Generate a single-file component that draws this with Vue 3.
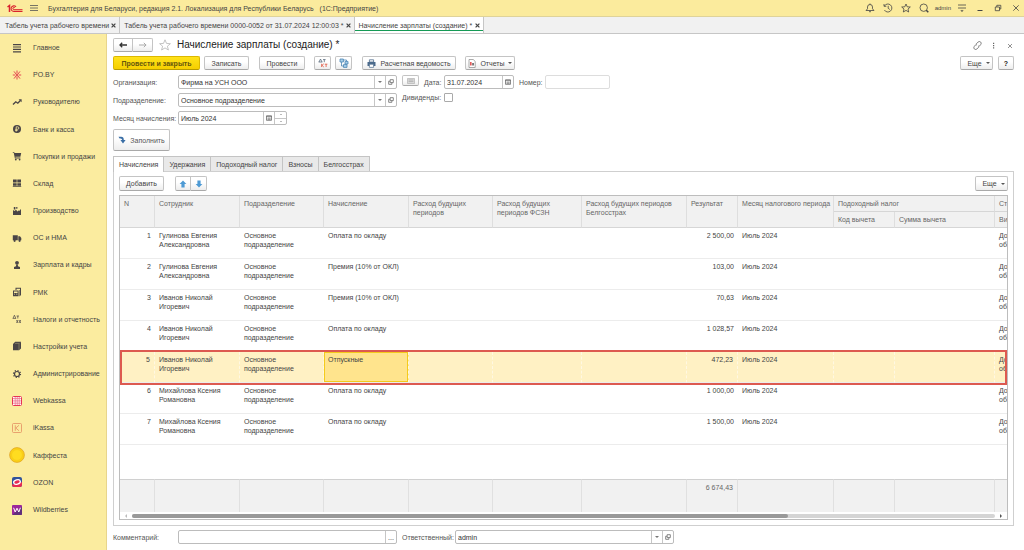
<script setup>
import { ref } from 'vue'

const sections = [
  { icon: 'menu', label: 'Главное' },
  { icon: 'spark', label: 'PO.BY' },
  { icon: 'trend', label: 'Руководителю' },
  { icon: 'bank', label: 'Банк и касса' },
  { icon: 'cart', label: 'Покупки и продажи' },
  { icon: 'stock', label: 'Склад' },
  { icon: 'factory', label: 'Производство' },
  { icon: 'truck', label: 'ОС и НМА' },
  { icon: 'person', label: 'Зарплата и кадры' },
  { icon: 'rmk', label: 'РМК' },
  { icon: 'tax', label: 'Налоги и отчетность' },
  { icon: 'book', label: 'Настройки учета' },
  { icon: 'gear', label: 'Администрирование' },
  { icon: 'webkassa', label: 'Webkassa' },
  { icon: 'ikassa', label: 'iKassa' },
  { icon: 'coin', label: 'Каффеста' },
  { icon: 'ozon', label: 'OZON' },
  { icon: 'wb', label: 'Wildberries' },
]

const windows = [
  'Табель учета рабочего времени',
  'Табель учета рабочего времени 0000-0052 от 31.07.2024 12:00:03 *',
  'Начисление зарплаты (создание) *',
]

const tabs = ['Начисления', 'Удержания', 'Подоходный налог', 'Взносы', 'Белгосстрах']
const activeTab = ref(0)

const rows = [
  { who: 'Гулинова Евгения Александровна', kind: 'Оплата по окладу', sum: '2 500,00' },
  { who: 'Гулинова Евгения Александровна', kind: 'Премия (10% от ОКЛ)', sum: '103,00' },
  { who: 'Иванов Николай Игоревич', kind: 'Премия (10% от ОКЛ)', sum: '70,63' },
  { who: 'Иванов Николай Игоревич', kind: 'Оплата по окладу', sum: '1 028,57' },
  { who: 'Иванов Николай Игоревич', kind: 'Отпускные', sum: '472,23' },
  { who: 'Михайлова Ксения Романовна', kind: 'Оплата по окладу', sum: '1 000,00' },
  { who: 'Михайлова Ксения Романовна', kind: 'Оплата по окладу', sum: '1 500,00' },
]
const selected = ref(4)
const month = ref('Июль 2024')
const date = ref('31.07.2024')
</script>

<template>
  <div class="app">
    <header class="topbar">
      <svg class="logo" viewBox="0 0 16 9" fill="none" stroke="#d9232e">
        <path d="M0.5 3 L2.5 1.5 V8" stroke-width="1.5" />
        <path d="M9 2.8 A2.8 2.8 0 1 0 7 7.4 H15.5" stroke-width="1.1" />
        <path d="M8 3.6 A1.2 1.2 0 1 0 7 5.6 H15.5" stroke-width="0.9" />
      </svg>
      <button class="plain burger" aria-label="Меню">
        <svg viewBox="0 0 8 8" width="8" height="8" stroke="#555" stroke-width="0.8"><path d="M0 1.5H8M0 4H8M0 6.5H8" /></svg>
      </button>
      <span class="apptitle">Бухгалтерия для Беларуси, редакция 2.1. Локализация для Республики Беларусь</span>
      <span class="platform">(1С:Предприятие)</span>
      <div class="tools">
        <button class="plain" aria-label="Уведомления">
          <svg viewBox="0 0 10 10"><path d="M1 7.5H9L7.5 5.8V4A2.5 2.5 0 0 0 2.5 4V5.8Z M4 8.7H6M5 0.5V1.5" /></svg>
        </button>
        <button class="plain" aria-label="История">
          <svg viewBox="0 0 10 10"><path d="M1.4 3A4 4 0 1 1 1.4 7M1 1V3.3H3.3M5.2 2.8V5.3L6.8 6.5" /></svg>
        </button>
        <button class="plain" aria-label="Избранное">
          <svg viewBox="0 0 10 10"><path d="M5 1L6.2 3.8L9.3 4L7 6L7.7 9L5 7.4L2.3 9L3 6L0.7 4L3.8 3.8Z" /></svg>
        </button>
        <button class="plain" aria-label="Поиск">
          <svg viewBox="0 0 10 10"><circle cx="4.7" cy="4.7" r="3.7" /><path d="M7.3 7.3L9.3 9.3" stroke-width="1.5" /></svg>
        </button>
        <a class="user" href="#">admin</a>
        <button class="plain" aria-label="Настройка">
          <svg viewBox="0 0 10 10"><path d="M1 2H9M1 5H9" /><path d="M3.8 7.4H6.2L5 8.7Z" fill="#444" stroke-width="0.4" /></svg>
        </button>
        <button class="plain" aria-label="Свернуть">
          <svg viewBox="0 0 10 10"><path d="M2.5 7.5H7.5" stroke-width="1" /></svg>
        </button>
        <button class="plain" aria-label="Развернуть">
          <svg viewBox="0 0 10 10"><path d="M2.3 4H6.5V7.7H2.3ZM3.8 4V2.3H7.8V6H6.5" /></svg>
        </button>
        <button class="plain" aria-label="Закрыть">
          <svg viewBox="0 0 10 10"><path d="M2.3 2.3L7.7 7.7M7.7 2.3L2.3 7.7" /></svg>
        </button>
      </div>
    </header>

    <div class="windows">
      <div v-for="(w, i) in windows" :key="w" class="window" :class="{ current: i === 2 }">
        <a href="#">{{ w }}</a>
        <button class="plain" aria-label="Закрыть вкладку">
          <svg viewBox="0 0 5 5" width="5" height="5" stroke="#444" stroke-width="1.2"><path d="M0.6 0.6L4.4 4.4M4.4 0.6L0.6 4.4" /></svg>
        </button>
      </div>
    </div>

    <div class="body">
      <nav class="side">
        <a v-for="s in sections" :key="s.label" href="#">
          <svg viewBox="0 0 16 16" fill="#4a4546">
            <g v-if="s.icon === 'menu'"><path d="M4 4H12V5.2H4ZM4 6.4H12V7.6H4ZM4 8.8H12V10H4ZM4 11.2H12V12.4H4Z" /></g>
            <g v-else-if="s.icon === 'spark'" fill="none" stroke="#e2354a" stroke-width="0.9">
              <path d="M8 3.5V6.6M8 9.4V12.5M3.8 8H6.4M9.6 8H12.2M5 4.4L7 7M11 4.4L9 7M5 11.6L7 9M11 11.6L9 9" />
              <circle cx="8" cy="8" r="0.7" fill="#e2354a" />
            </g>
            <g v-else-if="s.icon === 'trend'">
              <path d="M4 10.6L6.8 7.8L8.8 9.2L11.4 6.6" fill="none" stroke="#4a4546" stroke-width="1.4" /><path d="M9.6 5.2H12.6V8.2Z" />
            </g>
            <g v-else-if="s.icon === 'bank'">
              <circle cx="8" cy="8" r="4" /><path d="M7.2 10.6V5.8H8.6A1.2 1.2 0 0 1 8.6 8.3H6.2M6.2 9.5H8.6" fill="none" stroke="#fbec9f" stroke-width="0.8" />
            </g>
            <g v-else-if="s.icon === 'cart'">
              <path d="M3.8 4.2H5.3L5.6 5H12.2L11.4 8.8H6.3L6.5 9.6H11.4V10.4H5.9L4.8 5H3.8Z" /><circle cx="6.8" cy="11.6" r="0.9" /><circle cx="10.6" cy="11.6" r="0.9" />
            </g>
            <g v-else-if="s.icon === 'stock'"><path d="M4 4.5H7.7V7.6H4ZM8.3 4.5H12V7.6H8.3ZM4 8.2H7.7V10.8H4ZM8.3 8.2H12V10.8H8.3ZM3.8 11.3H12.2V12H3.8Z" /></g>
            <g v-else-if="s.icon === 'factory'"><path d="M4 12V7L5.5 8L7 6.8L8.5 8.4L10 7.2L11 8V6.5H12V12ZM4.8 4H6.4V6.6H4.8ZM7.2 4H8.4V5.8H7.2Z" /></g>
            <g v-else-if="s.icon === 'truck'"><path d="M3.8 5.3H8.8V10.3H3.8ZM9.3 6.3H11L12.3 8V10.3H9.3Z" /><circle cx="5.6" cy="10.8" r="1.1" /><circle cx="10.6" cy="10.8" r="1.1" /></g>
            <g v-else-if="s.icon === 'person'"><circle cx="8" cy="5.8" r="1.9" /><path d="M7.2 7.4H8.8L9 9.2L11 9.9V11.9H5V9.9L7 9.2Z" /></g>
            <g v-else-if="s.icon === 'rmk'"><path d="M6.5 3.8H12V11.5H11V4.8H7.5V6H6.5ZM4 6.6H9.6V12.2H4ZM10 6H10.6V12.2H10Z" /><path d="M5 7.6H8.6V9H5ZM5 9.8H6V10.6H5ZM7.2 9.8H8.4V10.6H7.2Z" fill="#fbec9f" /></g>
            <g v-else-if="s.icon === 'tax'" fill="none" stroke="#4a4546" stroke-width="0.7">
              <path d="M4 7.4L5.4 4.2L6.8 7.4M3.8 7.4H7M7.6 5H10M8.8 5V7.5M7.5 9L9 12M9 9L7.5 12M10 9L11.8 12M11.8 9L10 12" />
            </g>
            <g v-else-if="s.icon === 'book'"><path d="M6.2 3.8H12V10.5L10 12.2H4V6Z" /><path d="M10 5.8V12M6 5.4H10.4L11.2 4.6" stroke="#b3a97a" stroke-width="0.5" fill="none" /></g>
            <g v-else-if="s.icon === 'gear'" fill="none" stroke="#4a4546"><circle cx="8" cy="8" r="2.5" stroke-width="1.2" /><circle cx="8" cy="8" r="3.5" stroke-width="1.2" stroke-dasharray="1.2 1.55" /></g>
            <g v-else-if="s.icon === 'webkassa'">
              <rect x="3.5" y="3.5" width="9" height="9" rx="1" fill="#fff" stroke="#e63455" stroke-width="1" />
              <path d="M4 5.6H12M4 7.9H12M4 10.2H12M6.2 4V12M8.2 4V12M10.2 4V12" stroke="#ee6f86" stroke-width="0.8" />
            </g>
            <g v-else-if="s.icon === 'ikassa'" fill="none" stroke="#e58f62" stroke-width="0.8">
              <rect x="3.5" y="3.5" width="9" height="9" rx="1" /><path d="M6.3 5.3V10.8M10 5.3L6.8 8L10 10.8" />
            </g>
            <g v-else-if="s.icon === 'coin'"><circle cx="8" cy="8" r="7.4" fill="#fbd115" stroke="#dd9f22" stroke-width="0.7" /><circle cx="8" cy="8" r="5.4" fill="#ffdc20" stroke="#f3c41a" stroke-width="0.5" /></g>
            <g v-else-if="s.icon === 'ozon'">
              <rect x="3" y="3" width="10" height="10" rx="2" fill="#31539b" /><path d="M3 10.5L13 8V11A2 2 0 0 1 11 13H5A2 2 0 0 1 3 11Z" fill="#e72b52" />
              <ellipse cx="8" cy="8" rx="3.4" ry="2.2" fill="#e72b52" stroke="#fff" stroke-width="1.3" transform="rotate(-15 8 8)" />
            </g>
            <g v-else>
              <rect x="3" y="3" width="10" height="10" rx="1" fill="#9b279b" /><path d="M3 13L13 5V12A1 1 0 0 1 12 13Z" fill="#61307b" />
              <path d="M4.6 5.8L6.2 10L8 6.2L9.8 10L11.4 5.8" fill="none" stroke="#fff" stroke-width="1" />
            </g>
          </svg>
          <span>{{ s.label }}</span>
        </a>
      </nav>

      <main class="form">
        <div class="heading">
          <div class="pair">
            <button class="btn" aria-label="Назад"><svg viewBox="0 0 8 8" width="8" height="8" fill="none" stroke="#333" stroke-width="1.3"><path d="M0.8 4H8M3.2 1.8L1 4L3.2 6.2" /></svg></button>
            <button class="btn" aria-label="Вперед"><svg viewBox="0 0 8 8" width="8" height="8" fill="none" stroke="#aaa" stroke-width="1"><path d="M0 4H7.2M4.8 1.8L7 4L4.8 6.2" /></svg></button>
          </div>
          <svg class="star" viewBox="0 0 12 12" width="12" height="12" fill="none" stroke="#b5b5b5" stroke-width="0.8"><path d="M6 0.8L7.5 4.4L11.4 4.7L8.4 7.2L9.4 11L6 8.9L2.6 11L3.6 7.2L0.6 4.7L4.5 4.4Z" /></svg>
          <h1>Начисление зарплаты (создание) *</h1>
          <div class="right">
            <button class="plain" aria-label="Ссылка"><svg viewBox="0 0 9 9" width="9" height="9" fill="none" stroke="#666" stroke-width="0.8"><path d="M3.4 3V2.6L5 1.2A1.6 1.6 0 0 1 7.8 3.4L6.4 5.2H5M5.6 6V6.4L4 7.8A1.6 1.6 0 0 1 1.2 5.6L2.6 3.8H4" /></svg></button>
            <button class="plain" aria-label="Действия"><svg viewBox="0 0 9 9" width="9" height="9" fill="#666"><path d="M4 1.8H5.2V3H4ZM4 4H5.2V5.2H4ZM4 6.2H5.2V7.4H4Z" /></svg></button>
            <button class="plain" aria-label="Закрыть форму"><svg viewBox="0 0 9 9" width="9" height="9" stroke="#777" stroke-width="0.8"><path d="M3 3L7 7M7 3L3 7" /></svg></button>
          </div>
        </div>

        <div class="commands">
          <button class="btn primary">Провести и закрыть</button>
          <button class="btn save">Записать</button>
          <button class="btn post">Провести</button>
          <button class="btn icon" aria-label="Проводки"><svg viewBox="0 0 10 10" width="10" height="10" fill="none" stroke-width="0.8"><path d="M1 4L2.5 1L4 4M0.6 4H4.4M5 1.6H7.6M6.3 1.6V4.2" stroke="#55677a" /><path d="M3.6 5.8V9M5.8 5.8L4 7.3L5.8 9M6.8 6.2H9.4M8.1 6.2V9" stroke="#e0563f" /></svg></button>
          <button class="btn icon structure" aria-label="Структура подчиненности"><svg viewBox="0 0 10 10" width="10" height="10"><path d="M1 1H4.4V4H1ZM6 3.4H9V6H6ZM4.5 6.6H8V9.4H4.5Z" fill="#a9cfe8" stroke="#4b87b5" stroke-width="0.8" /><path d="M4.5 2H7.5V3.4M2.5 4V8H4.5" fill="none" stroke="#4b87b5" stroke-width="0.8" /></svg></button>
          <button class="btn sheet"><svg viewBox="0 0 9 9" width="9" height="9"><path d="M2.4 0.8H6.6V3H2.4Z" fill="#fff" stroke="#4c6b8c" stroke-width="0.8" /><path d="M0.5 3H8.5V7H0.5Z" fill="#4c6b8c" /><path d="M2.4 5.2H6.6V8.4H2.4Z" fill="#fff" stroke="#4c6b8c" stroke-width="0.7" /></svg>Расчетная ведомость</button>
          <button class="btn reports"><svg viewBox="0 0 8 9" width="8" height="9"><path d="M1 0.5H5.2L7.2 2.4V8.5H1Z" fill="#fff" stroke="#888" stroke-width="0.7" /><path d="M2.2 3H3.5V6.5H2.2Z" fill="#d33" /><path d="M4.3 4H5.8V6.5H4.3Z" fill="#555" /></svg>Отчеты<i class="caret"></i></button>
          <div class="right">
            <button class="btn more">Еще<i class="caret"></i></button>
            <button class="btn help"><b>?</b></button>
          </div>
        </div>

        <div class="line">
          <label class="lead" for="org">Организация:</label>
          <div class="field wide">
            <select id="org"><option>Фирма на УСН ООО</option></select>
            <span class="drop"><i class="caret"></i></span>
            <button aria-label="Открыть организацию"><svg viewBox="0 0 7 7" width="6" height="6"><path d="M2.5 0.8H6.2V4.2H2.5ZM2.5 2.6H0.8V6.2H4.5V4.2" /></svg></button>
          </div>
          <button class="btn kb" aria-label="Подписи"><svg viewBox="0 0 8 6" width="8" height="6"><path d="M0.5 0.5H7.5V5.5H0.5Z" fill="#ddd" stroke="#aaa" stroke-width="0.6" /><path d="M1.5 2H6.5M1.5 3.6H6.5" stroke="#999" stroke-width="0.6" /></svg></button>
          <label class="date-label" for="date">Дата:</label>
          <div class="field date">
            <input id="date" v-model="date" type="text">
            <button aria-label="Выбрать дату"><svg viewBox="0 0 7 7" width="6" height="6"><path d="M0.6 1H6.4V6.2H0.6Z" /><path d="M0.6 1.5H6.4M1.8 3.6H5.4M1.8 5H5.4" /></svg></button>
          </div>
          <label class="num-label" for="num">Номер:</label>
          <div class="field num"><input id="num" type="text"></div>
        </div>

        <div class="line">
          <label class="lead" for="dep">Подразделение:</label>
          <div class="field wide">
            <select id="dep"><option>Основное подразделение</option></select>
            <span class="drop"><i class="caret"></i></span>
            <button aria-label="Открыть подразделение"><svg viewBox="0 0 7 7" width="6" height="6"><path d="M2.5 0.8H6.2V4.2H2.5ZM2.5 2.6H0.8V6.2H4.5V4.2" /></svg></button>
          </div>
          <label class="div-label" for="div">Дивиденды:</label>
          <input id="div" class="check" type="checkbox">
        </div>

        <div class="line">
          <label class="lead" for="month">Месяц начисления:</label>
          <div class="field month">
            <input id="month" v-model="month" type="text">
            <button aria-label="Выбрать месяц"><svg viewBox="0 0 7 7" width="6" height="6"><path d="M0.6 1H6.4V6.2H0.6Z" /><path d="M0.6 1.5H6.4M1.8 3.6H5.4M1.8 5H5.4" /></svg></button>
            <div class="spin">
              <button aria-label="Следующий месяц"><i class="caret up"></i></button>
              <button aria-label="Предыдущий месяц"><i class="caret"></i></button>
            </div>
          </div>
        </div>

        <button class="btn fill"><svg viewBox="0 0 8 8" width="8" height="8"><path d="M0.5 0.8H3.2Q5.8 0.8 5.8 4H7.6L5 7.4L2.4 4H4.2Q4 2.4 2.8 2.4H1.6Z" fill="#3a6ea5" /></svg>Заполнить</button>

        <div class="tabs" role="tablist">
          <button v-for="(t, i) in tabs" :key="t" role="tab" :aria-selected="i === activeTab" :class="{ on: i === activeTab }" @click="activeTab = i">{{ t }}</button>
        </div>

        <section class="panel">
          <div class="rowtools">
            <button class="btn add">Добавить</button>
            <div class="pair arrows">
              <button class="btn" aria-label="Вверх"><svg viewBox="0 0 8 8" width="8" height="8"><path d="M4 0.5L7.4 4H5.6V7.5H2.4V4H0.6Z" fill="#4e9ad4" /></svg></button>
              <button class="btn" aria-label="Вниз"><svg viewBox="0 0 8 8" width="8" height="8"><path d="M4 7.5L7.4 4H5.6V0.5H2.4V4H0.6Z" fill="#4e9ad4" /></svg></button>
            </div>
            <div class="right"><button class="btn more">Еще<i class="caret"></i></button></div>
          </div>

          <div class="grid">
            <table>
              <colgroup>
                <col class="c-n"><col class="c-who"><col class="c-dep"><col class="c-who"><col class="c-dep"><col class="c-fszn"><col class="c-bgs"><col class="c-sum"><col class="c-month"><col class="c-code"><col class="c-ded"><col>
              </colgroup>
              <thead>
                <tr>
                  <th rowspan="2">N</th>
                  <th rowspan="2">Сотрудник</th>
                  <th rowspan="2">Подразделение</th>
                  <th rowspan="2">Начисление</th>
                  <th rowspan="2">Расход будущих периодов</th>
                  <th rowspan="2">Расход будущих периодов ФСЗН</th>
                  <th rowspan="2">Расход будущих периодов Белгосстрах</th>
                  <th rowspan="2">Результат</th>
                  <th rowspan="2" class="nowrap">Месяц налогового периода</th>
                  <th colspan="2">Подоходный налог</th>
                  <th class="cut">Ст</th>
                </tr>
                <tr>
                  <th>Код вычета</th>
                  <th>Сумма вычета</th>
                  <th class="cut">Вид</th>
                </tr>
              </thead>
              <tbody>
                <tr v-for="(r, i) in rows" :key="i" :class="{ selected: i === selected }" @click="selected = i">
                  <td class="r">{{ i + 1 }}</td>
                  <td>{{ r.who }}</td>
                  <td>Основное подразделение</td>
                  <td class="kind">{{ r.kind }}</td>
                  <td></td><td></td><td></td>
                  <td class="r">{{ r.sum }}</td>
                  <td>{{ month }}</td>
                  <td></td><td></td>
                  <td class="cut">До<br>обы</td>
                </tr>
                <tr class="blank"><td colspan="12"></td></tr>
              </tbody>
              <tfoot>
                <tr>
                  <td v-for="n in 12" :key="n" class="r">{{ n === 8 ? '6 674,43' : '' }}</td>
                </tr>
              </tfoot>
            </table>
            <div class="scroll">
              <i class="tri left"></i>
              <div class="track"><div class="thumb"></div></div>
              <i class="tri"></i>
            </div>
          </div>
        </section>

        <div class="line bottom">
          <label class="lead" for="comment">Комментарий:</label>
          <div class="field wide">
            <input id="comment" type="text">
            <button aria-label="Редактировать комментарий">...</button>
          </div>
          <label class="resp-label" for="resp">Ответственный:</label>
          <div class="field wide">
            <select id="resp"><option>admin</option></select>
            <span class="drop"><i class="caret"></i></span>
            <button aria-label="Открыть ответственного"><svg viewBox="0 0 7 7" width="6" height="6"><path d="M2.5 0.8H6.2V4.2H2.5ZM2.5 2.6H0.8V6.2H4.5V4.2" /></svg></button>
          </div>
        </div>
      </main>
    </div>
  </div>
</template>

<style>
body { background: #fff; }
</style>

<style scoped>
* { box-sizing: border-box; }
.app { display: flex; flex-direction: column; min-height: 100vh; font-family: "Liberation Sans", Arial, sans-serif; font-size: 7px; line-height: 9px; color: #444; }
button, input, select { font: inherit; color: inherit; margin: 0; }
svg { display: block; flex: none; }
a { color: inherit; text-decoration: none; }
.plain { border: 0; padding: 0; background: none; display: flex; align-items: center; justify-content: center; }
.right { margin-left: auto; display: flex; align-items: center; }

.topbar { display: flex; align-items: center; height: 17px; padding: 0 3px 0 7px; background: #fbeb9d; border-bottom: 1px solid #dfd39a; white-space: nowrap; }
.logo { width: 16px; height: 9px; }
.burger { margin: 0 10px 0 7px; }
.platform { margin-left: 6px; }
.tools { margin-left: auto; display: flex; align-items: center; gap: 8px; }
.tools svg { width: 10px; height: 10px; fill: none; stroke: #444; stroke-width: 0.8; }
.user { font-size: 6px; margin: 0 -2px; }

.windows { display: flex; height: 17px; background: #f1f1f1; border-bottom: 1px solid #c6c6c6; white-space: nowrap; }
.window { display: flex; align-items: center; gap: 2px; padding: 0 3px 0 4px; border-right: 1px solid #c6c6c6; }
.window:first-child { padding-left: 5px; }
.window.current { background: #fff; gap: 3px; box-shadow: inset 0 -2px #fff, inset 0 -3px #159a55; }

.body { flex: 1; display: flex; }
.side { flex: none; width: 107px; display: flex; flex-direction: column; padding-bottom: 27px; background: #fbec9f; border-right: 1px solid #e8d58c; white-space: nowrap; }
.side a { flex: 1; display: flex; align-items: center; padding-left: 9px; gap: 8px; }
.side svg { width: 16px; height: 16px; }

.form { flex: 1; min-width: 0; display: flex; flex-direction: column; padding: 4px 10px 0 6px; }
.btn { display: flex; align-items: center; justify-content: center; height: 14px; padding: 0; border: 1px solid #c4c4c4; border-bottom-color: #a9a9a9; border-radius: 2px; background: linear-gradient(#fff 40%, #ededed); white-space: nowrap; }
.pair { display: flex; }
.pair .btn { width: 20px; }
.pair .btn:first-child { border-radius: 2px 0 0 2px; }
.pair .btn:last-child { border-radius: 0 2px 2px 0; border-left: 0; }
.heading { display: flex; align-items: center; height: 14px; }
.star { margin: 0 6px 0 6px; }
h1 { margin: 0; font-size: 10px; line-height: 14px; font-weight: 400; color: #222; }
.heading .right { gap: 7px; }

.commands { display: flex; height: 14px; margin: 4px 0 5px; }
.commands .right { gap: 5px; }
.primary { width: 87px; font-weight: 700; color: #66560c; background: linear-gradient(#ffe21a, #f6cf00); border-color: #dcb800; border-bottom-color: #b89b00; }
.save { width: 45px; margin-left: 4px; }
.post { width: 46px; margin-left: 10px; }
.icon { width: 17px; margin-left: 9px; }
.structure { margin-left: 4px; }
.sheet { width: 94px; margin-left: 10px; gap: 4px; }
.reports { width: 50px; margin-left: 9px; gap: 4px; }
.more { width: 33px; gap: 4px; padding-left: 4px; }
.help { width: 16px; color: #222; }
.caret { width: 0; height: 0; border: 2px solid transparent; border-top-color: #555; border-bottom: 0; }
.reports .caret { margin-left: -1px; }
.up { transform: rotate(180deg); }

.line { display: flex; align-items: center; height: 14px; margin-bottom: 4px; white-space: nowrap; color: #555; }
.lead { width: 65px; }
.field { display: flex; height: 14px; border: 1px solid #bcbcbc; border-radius: 2px; background: #fff; color: #333; }
.field input, .field select { flex: 1; min-width: 0; width: 0; border: 0; padding: 0 2px; background: none; outline: 0; appearance: none; }
.field button, .drop { flex: none; display: flex; align-items: center; justify-content: center; width: 11px; padding: 0; border: 0; border-left: 1px solid #c6c6c6; background: none; }
.field svg { fill: none; stroke: #666; stroke-width: 0.9; }
.wide { width: 219px; }
.date { width: 70px; }
.num { width: 65px; border-color: #ddd; }
.month { width: 109px; }
.field .spin { display: flex; flex-direction: column; width: 12px; border-left: 1px solid #c6c6c6; }
.spin button { flex: 1; width: 11px; border-left: 0; }
.spin button + button { border-top: 1px solid #c6c6c6; }
.spin .caret { border-width: 1px; border-bottom: 0; }
.drop .caret, .spin .caret { border-top-color: #777; }
.kb { width: 17px; height: 11px; margin: 0 5px; align-self: flex-start; }
.date-label { width: 20px; }
.num-label { width: 26px; margin-left: 5px; }
.div-label { width: 42px; margin-left: 5px; align-self: flex-start; }
.check { appearance: none; width: 9px; height: 9px; border: 1px solid #aaa; border-radius: 1px; background: #fff; align-self: flex-start; }
.resp-label { width: 53px; margin-left: 5px; }
.fill { align-self: flex-start; width: 57px; height: 22px; margin-bottom: 5px; gap: 4px; color: #555; }

.tabs { display: flex; height: 15px; }
.tabs button { padding: 0 5px; border: 1px solid #c4c4c4; border-left: 0; border-bottom: 0; background: #e9e9e9; white-space: nowrap; }
.tabs button:first-child { border-left: 1px solid #c4c4c4; }
.tabs button.on { background: #fff; position: relative; z-index: 1; margin-bottom: -1px; padding-bottom: 1px; }
.panel { border: 1px solid #cfcfcf; padding: 4px 5px 5px; flex: 1; display: flex; flex-direction: column; }
.rowtools { display: flex; margin-bottom: 4px; }
.rowtools .btn { height: 15px; }
.add { width: 45px; }
.arrows { margin-left: 11px; }
.arrows .btn { width: 16px; }

.grid { flex: 1; display: flex; flex-direction: column; border: 1px solid #bdbdbd; overflow: hidden; }
table { width: 100%; table-layout: fixed; border-collapse: separate; border-spacing: 0; }
.c-n { width: 35px; } .c-who { width: 85px; } .c-dep { width: 84px; } .c-fszn { width: 89px; } .c-bgs { width: 105px; }
.c-sum { width: 51px; } .c-month { width: 96px; } .c-code { width: 61px; } .c-ded { width: 100px; }
th { height: 16px; padding: 3px 4px 0; text-align: left; vertical-align: top; font-weight: 400; color: #666; background: #f1f1f1; border-right: 1px solid #dedede; border-bottom: 1px solid #d6d6d6; }
.nowrap { white-space: nowrap; }
td { height: 31px; padding: 3px 4px 0; vertical-align: top; border-bottom: 1px solid #ececec; }
tr > :last-child { border-right: 0; }
.r { text-align: right; }
.cut { overflow: hidden; white-space: nowrap; }
.selected { position: relative; }
.selected td { background: #fff1c4; border-right: 1px dashed #fff8e2; }
.selected td.kind { background: #ffe48d; box-shadow: inset 0 0 0 1px #f4cb1c; }
.selected td:first-child::after { content: ""; position: absolute; inset: -2px 0 -2px; border: 2px solid #dd5a50; z-index: 1; pointer-events: none; }
.blank td { height: 34px; border-bottom: 0; }
tfoot td { height: 33px; color: #666; background: #f1f1f1; border-top: 1px solid #d0d0d0; border-right: 1px solid #e0e0e0; border-bottom: 0; }
.scroll { display: flex; align-items: center; gap: 5px; height: 7px; padding: 0 5px; }
.track { flex: 1; height: 4px; border-radius: 2px; background: #d5d5d5; }
.thumb { width: 76%; height: 4px; border-radius: 2px; background: #999; }
.tri { width: 0; height: 0; border: 2px solid transparent; border-left-color: #555; border-right: 0; }
.left { border: 2px solid transparent; border-right-color: #bbb; border-left: 0; }
.bottom { margin: 4px 0 6px; }
</style>
